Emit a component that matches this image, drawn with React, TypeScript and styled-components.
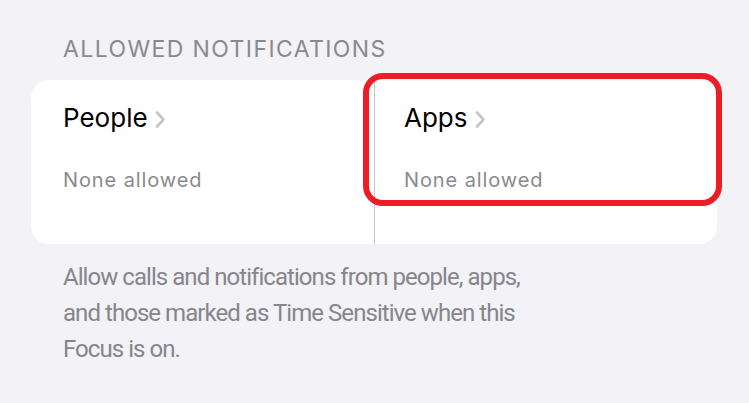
import React from 'react';
import styled, { createGlobalStyle } from 'styled-components';

const GlobalStyle = createGlobalStyle`
	html, body {
		margin: 0;
		padding: 0;
		background: #f2f2f7;
	}
	body {
		font-family: Inter, "Noto Sans", sans-serif;
		-webkit-font-smoothing: antialiased;
	}
`;

const Page = styled.div`
	width: 749px;
	height: 403px;
	box-sizing: border-box;
	padding: 35px 32px 0 31px;
	background: #f2f2f7;
	overflow: hidden;
`;

const SectionHeader = styled.div`
	font-size: 23px;
	line-height: 28px;
	color: #8a8a8e;
	letter-spacing: 1.4px;
	padding-left: 32px;
	margin-bottom: 17px;
`;

const Card = styled.div`
	position: relative;
	display: grid;
	grid-template-columns: 1fr 1fr;
	height: 164px;
	background: #ffffff;
	border-radius: 18px;
`;

const Cell = styled.div<{ $divider?: boolean }>`
	display: flex;
	flex-direction: column;
	padding: 22px 30px 0 ${(p) => (p.$divider ? '29px' : '32px')};
	border-left: ${(p) => (p.$divider ? '1px solid #c6c6c8' : 'none')};
`;

const Title = styled.div`
	display: flex;
	align-items: center;
	gap: 7px;
	font-size: 26px;
	line-height: 32px;
	color: #000000;
`;

const Subtitle = styled.div`
	margin-top: 34px;
	font-size: 20px;
	line-height: 24px;
	letter-spacing: 0.9px;
	color: #8a8a8e;
`;

const Highlight = styled.div`
	position: absolute;
	left: 332px;
	top: -7px;
	width: 359px;
	height: 133px;
	box-sizing: border-box;
	border: 6px solid #ee1d25;
	border-radius: 20px;
	pointer-events: none;
`;

const Footer = styled.p`
	margin: 15px 0 0;
	padding-left: 32px;
	max-width: 472px;
	font-family: Roboto, "Noto Sans", sans-serif;
	font-size: 24px;
	line-height: 36px;
	letter-spacing: -0.95px;
	color: #86868b;
`;

const Chevron = () => (
	<svg width="11" height="17" viewBox="0 0 11 17" style={{ marginTop: 3 }}>
		<path
			d="M2 1.5 L8.5 8.5 L2 15.5"
			fill="none"
			stroke="#c4c4c7"
			strokeWidth="2.6"
			strokeLinecap="round"
			strokeLinejoin="round"
		/>
	</svg>
);

const items = [
	{ title: 'People', detail: 'None allowed' },
	{ title: 'Apps', detail: 'None allowed' },
];

export default function App() {
	return (
		<>
			<GlobalStyle />
			<Page>
				<SectionHeader>ALLOWED NOTIFICATIONS</SectionHeader>
				<Card>
					{items.map((item, index) => (
						<Cell key={item.title} $divider={index > 0}>
							<Title>
								{item.title}
								<Chevron />
							</Title>
							<Subtitle>{item.detail}</Subtitle>
						</Cell>
					))}
					<Highlight />
				</Card>
				<Footer>
					Allow calls and notifications from people, apps, and those marked as Time Sensitive when this
					Focus is on.
				</Footer>
			</Page>
		</>
	);
}
